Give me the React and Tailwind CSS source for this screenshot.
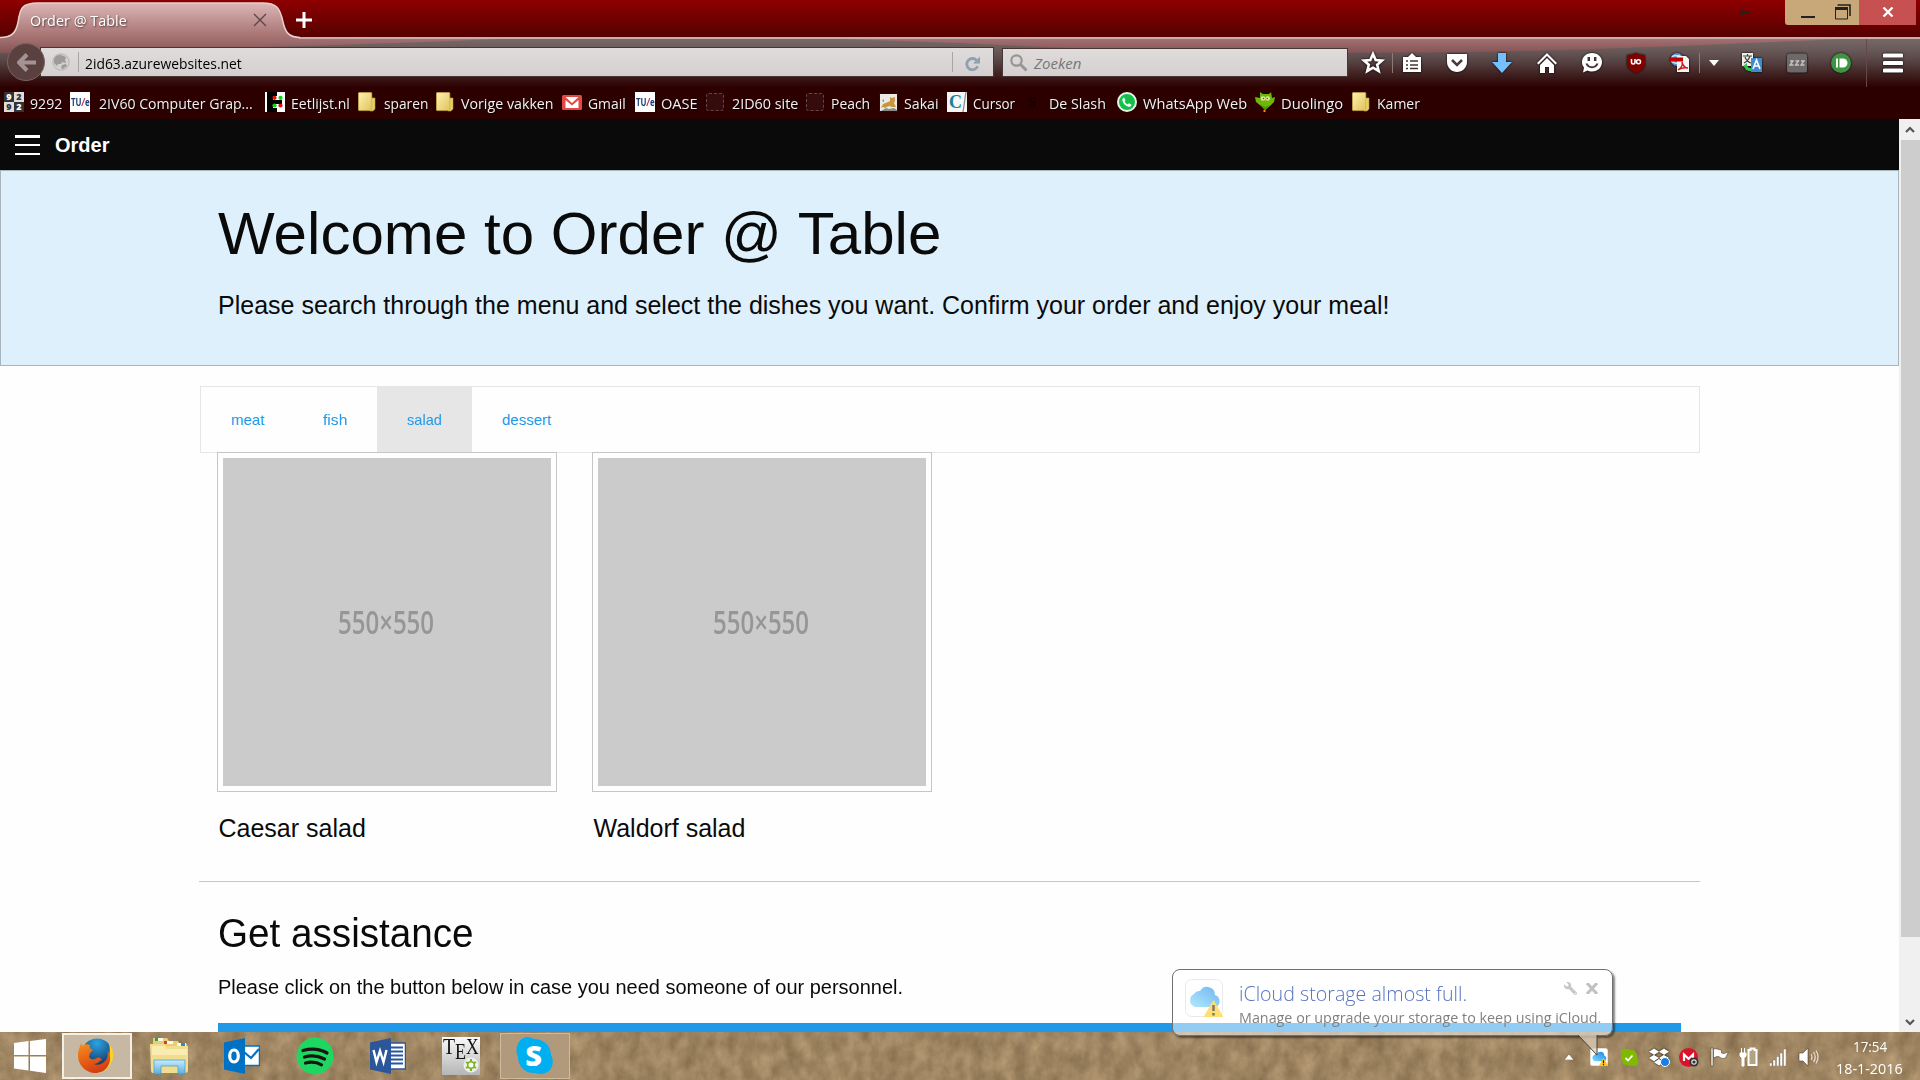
import { useLayoutEffect, useRef } from "react";
import { FaDropbox, FaWrench } from "react-icons/fa";

/* Single line of text squeezed or stretched to the width of its box. */
function Fit({ className = "", children }) {
  const outer = useRef(null);
  const inner = useRef(null);
  useLayoutEffect(() => {
    const natural = inner.current.offsetWidth;
    if (natural) inner.current.style.transform = `scaleX(${outer.current.clientWidth / natural})`;
  }, []);
  return (
    <span ref={outer} className={`block shrink-0 whitespace-nowrap ${className}`}>
      <span ref={inner} className="inline-block origin-left">{children}</span>
    </span>
  );
}

const Folder = () => (
  <svg viewBox="0 0 18 20" className="h-5 w-[18px]">
    <defs>
      <linearGradient id="fold" x1="0" y1="0" x2="1" y2="1">
        <stop offset="0" stopColor="#fff3b0" />
        <stop offset="1" stopColor="#dfc35c" />
      </linearGradient>
    </defs>
    <path d="M13 6h4v11l-2 2h-3z" fill="#e9cf67" stroke="#b59b3c" strokeWidth=".6" />
    <rect x=".4" y=".6" width="13.4" height="18" rx=".8" fill="url(#fold)" stroke="#c9ad4c" strokeWidth=".7" />
  </svg>
);

const Tue = () => (
  <span className="flex h-5 w-5 items-center justify-center bg-white">
    <Fit className="w-[19px] text-[10px] leading-none font-bold text-[#1b3f7a]">TU<i className="text-[#c22a4c]">/</i>e</Fit>
  </span>
);

const Placeholder = () => <span className="h-[18px] w-[18px] rounded-[3px] border border-dashed border-[#664747] bg-[#350b0b]" />;

const Nine = () => (
  <span className="grid h-5 w-5 grid-cols-2 grid-rows-2 text-center text-[9px] leading-[10px] font-bold">
    <b className="bg-[#333] text-white">9</b>
    <b className="bg-[#ddd] text-[#333]">2</b>
    <b className="bg-[#ddd] text-[#333]">9</b>
    <b className="bg-[#333] text-white">2</b>
  </span>
);

const Eet = () => (
  <svg viewBox="0 0 20 20" className="h-5 w-5">
    <path d="M0 0h20v20H0z" fill="#fff" />
    <path d="M2 0h10v4H8v4h9v4H8v4h4v4H2z" fill="#000" />
    <circle cx="9.500" cy="5.800" r="2.100" fill="#f00" />
    <circle cx="15.500" cy="5.800" r="2.100" fill="#0d0" />
    <circle cx="9.500" cy="13.500" r="2.100" fill="#0d0" />
    <circle cx="15.500" cy="13.500" r="2.100" fill="#f00" />
  </svg>
);

const Gmail = () => (
  <svg viewBox="0 0 20 15" className="h-[15px] w-5">
    <rect width="20" height="15" rx="1.500" fill="#e04a42" />
    <path d="M3.500 2h13L10 8zM3.500 13V5L10 10.500 16.500 5v8z" fill="#fff" />
  </svg>
);

const Sakai = () => (
  <svg viewBox="0 0 19 19" className="h-[19px] w-[19px]">
    <path d="M.5.5h18v18H.5z" fill="#eceae4" stroke="#111" />
    <path d="M2 15l2-4 5-2 2-1V4l2 1 3-1v4l-1 2 1 2 1 2-4 0-3-1-4 2-2-1z" fill="#c8963e" />
    <path d="M2 18l5-3 3 1 5-1 3 2v1zM3 8l2-2v3z" fill="#8a8a86" />
  </svg>
);

const Cursor = () => (
  <span className="flex h-5 w-5 bg-[#f6f6f6] pl-[2px]">
    <b className="font-['Liberation_Serif',serif] text-[18px] leading-[20px] text-[#17809c]">C</b>
    <svg viewBox="0 0 5 20" className="h-5 w-[5px]"><path d="M4 0L1 20" stroke="#888" strokeWidth="1.200" /></svg>
  </span>
);

const Whats = () => (
  <span className="flex h-5 w-5 items-center justify-center rounded-full border-2 border-[#e8f5e9] bg-[#12c14a]">
    <svg viewBox="0 0 16 16" className="h-4 w-4 shrink-0"><path d="M5 3.500l1.500 2.700-1 1c.7 1.500 1.700 2.500 3.200 3.200l1.200-1.100 2.600 1.400c-.3 1.800-1.500 2.300-3 2C6.500 12 4 9.500 3.400 6.500 3.200 5 3.700 4 5 3.500z" fill="#fff" /></svg>
  </span>
);

const Duo = () => (
  <svg viewBox="0 0 20 20" className="h-5 w-5">
    <path d="M5 0l3 2h6l2-2 1 6 3-1-1 5-4 4-5 4-4-4-5-4-1-5 5 1z" fill="#6cb80a" />
    <path d="M5 12l5 6 5-5-5 2z" fill="#4f9604" />
    <circle cx="8" cy="6.500" r="2.300" fill="#d8ec9e" />
    <circle cx="12.700" cy="6.500" r="2.300" fill="#d8ec9e" />
    <circle cx="8.400" cy="6.500" r=".8" fill="#555" />
    <circle cx="12.300" cy="6.500" r=".8" fill="#555" />
    <path d="M9.500 8h2l-1 2.500zM8.500 18h2v2h-2z" fill="#f08b1d" />
  </svg>
);

const Slash = () => <b className="w-5 text-center font-['Liberation_Serif',serif] text-[15px] text-[#150000]">S</b>;

const bookmarks = [
  [Nine, "9292", "ml-1 w-5", "ml-[6px] w-[32px]"],
  [Tue, "2IV60 Computer Grap...", "ml-2 w-5", "ml-[9px] w-[154px]"],
  [Eet, "Eetlijst.nl", "ml-3 w-5", "ml-[6px] w-[59px]"],
  [Folder, "sparen", "ml-2 w-[18px]", "ml-2 w-[44px]"],
  [Folder, "Vorige vakken", "ml-2 w-[18px]", "ml-[7px] w-[93px]"],
  [Gmail, "Gmail", "ml-2 w-5", "ml-[6px] w-[38px]"],
  [Tue, "OASE", "ml-[9px] w-5", "ml-[6px] w-[37px]"],
  [Placeholder, "2ID60 site", "ml-2 w-[18px]", "ml-2 w-[66px]"],
  [Placeholder, "Peach", "ml-2 w-[18px]", "ml-[7px] w-[39px]"],
  [Sakai, "Sakai", "ml-[9px] w-[19px]", "ml-[6px] w-[35px]"],
  [Cursor, "Cursor", "ml-2 w-5", "ml-[6px] w-[42px]"],
  [Slash, "De Slash", "ml-[7px] w-5", "ml-[7px] w-[57px]"],
  [Whats, "WhatsApp Web", "ml-[11px] w-5", "ml-[6px] w-[104px]"],
  [Duo, "Duolingo", "ml-2 w-5", "ml-[6px] w-[62px]"],
  [Folder, "Kamer", "ml-[9px] w-[18px]", "ml-[7px] w-[43px]"],
];

function TabStrip() {
  return (
    <div className="relative z-10 flex h-[37px] bg-linear-to-b from-[#8f0000] to-[#560000]">
      <div className="relative flex h-[39px] w-[296px] items-center pt-[2px]">
        <svg viewBox="0 0 300 39" className="absolute top-0 left-0 h-[39px] w-[300px]">
          <defs>
            <linearGradient id="tab" x1="0" y1="0" x2="0" y2="1">
              <stop offset="0" stopColor="#dcb6b6" />
              <stop offset="1" stopColor="#a26c6c" />
            </linearGradient>
          </defs>
          <path d="M0 39v-2c13 0 16-6 18-15C20 8 22 3 38 3h224c15 0 18 5 21 19 2 9 5 15 16 15v2z" fill="url(#tab)" />
          <path d="M0 37.500c13 0 16-6 18-15C20 8 22 3 38 3h224c15 0 18 5 21 19 2 9 5 15.500 17 15.500" fill="none" stroke="#e6d0d0" strokeWidth="1.500" />
        </svg>
        <Fit className="relative ml-[30px] w-[97px] text-[15px] text-white [text-shadow:1px_1px_2px_#0009]">Order @ Table</Fit>
        <svg viewBox="0 0 14 14" className="relative mb-[2px] ml-[126px] h-[14px] w-[14px]"><path d="M1 1l12 12M13 1L1 13" stroke="#5d4646" strokeWidth="1.300" /></svg>
      </div>
      <svg viewBox="0 0 16 16" className="mt-[12px] h-4 w-4"><path d="M8 0v16M0 8h16" stroke="#fff" strokeWidth="3" /></svg>
      <div className="ml-auto flex">
        <svg viewBox="0 0 10 6" className="mt-[9px] mr-[35px] h-[6px] w-[10px]"><path d="M0 3l3-3v2h4V0l3 3-3 3V4H3v2z" fill="#222" /></svg>
        <div className="flex h-[25px] w-[74px] rounded-bl-[3px] bg-[#c8a878]">
          <i className="mt-4 ml-4 h-[2px] w-[14px] bg-[#222]" />
          <svg viewBox="0 0 16 16" className="mt-1 ml-5 h-4 w-4"><path d="M2.500 1H15v11" fill="none" stroke="#222" strokeWidth="1.600" /><path d="M.5 4h12v11H.5z" fill="#c8a878" stroke="#222" /><path d="M0 3h13v3H0z" fill="#222" /></svg>
        </div>
        <div className="mr-1 flex h-[25px] w-[57px] items-center justify-center bg-[#c75050]">
          <svg viewBox="0 0 12 10" className="mb-[2px] h-[10px] w-3"><path d="M1.500.5l9 9M10.500.5l-9 9" stroke="#fff" strokeWidth="2.300" /></svg>
        </div>
      </div>
    </div>
  );
}

const ToolIcon = ({ className, children }) => (
  <svg viewBox="0 0 20 20" className={`h-5 w-5 shrink-0 drop-shadow-[0_0_1px_#000] ${className}`}>{children}</svg>
);

function NavBar() {
  return (
    <div className="relative flex h-[50px] items-start border-t-2 border-[#c8adad] bg-[linear-gradient(#786969,#675757_25%,#5a4848_42%,#3f1f1f_75%,#2d0000)]">
      <svg viewBox="0 0 1920 14" preserveAspectRatio="none" className="absolute top-0 left-0 h-[14px] w-[1920px]">
        <defs>
          <linearGradient id="glass" x1="0" y1="0" x2="0" y2="1">
            <stop offset="0" stopColor="#a17070" />
            <stop offset="1" stopColor="#855353" />
          </linearGradient>
        </defs>
        <path d="M0 0h500Q320 8 0 14zM840 0h1000Q1560 13 1420 13.500 1150 14 960 4z" fill="url(#glass)" />
      </svg>
      <div className="relative z-10 mt-[4px] ml-[7px] flex h-[38px] w-[38px] shrink-0 items-center justify-center rounded-full border border-[#7d6262] bg-[#5b4040]">
        <svg viewBox="0 0 18 18" className="h-[19px] w-[19px]"><path d="M9.500 1.500L2 9l7.500 7.500M2.500 9H18" fill="none" stroke="#a39393" strokeWidth="4" /></svg>
      </div>
      <div className="relative mt-[8px] -ml-[5px] flex h-[30px] w-[954px] shrink-0 items-center border border-[#4a3535] bg-linear-to-b from-[#e0dcdc] to-[#d5d0d0]">
        <svg viewBox="0 0 18 18" className="ml-[11px] h-[18px] w-[18px]">
          <circle cx="9" cy="9" r="8.200" fill="#d3d0d0" stroke="#b5b2b2" />
          <path d="M9 2l5 2-1 3 1 3-4-1-1 2-3 0-1 2-3-3 0-4 2-3 3-1zM10 12l4-1 1 2-4 3-2-1z" fill="#9d9a9a" />
        </svg>
        <i className="ml-2 h-5 w-px bg-[#aaa4a4]" />
        <Fit className="ml-[6px] w-[157px] pt-[2px] text-[15px] text-black">2id63.azurewebsites.net</Fit>
        <i className="ml-auto h-5 w-px bg-[#aaa4a4]" />
        <svg viewBox="0 0 16 16" className="mt-[2px] mr-[13px] ml-[12px] h-[15px] w-[15px]"><path d="M12.300 4.500A6 6 0 1 0 13.500 11" fill="none" stroke="#8fa0ae" strokeWidth="3" /><path d="M16 .5v7.500H8.500z" fill="#8fa0ae" /></svg>
      </div>
      <div className="relative mt-[9px] ml-[8px] flex h-[29px] w-[346px] shrink-0 items-center border border-[#4a3535] bg-linear-to-b from-[#e0dcdc] to-[#d5d0d0]">
        <svg viewBox="0 0 18 18" className="ml-[7px] h-[18px] w-[18px]"><circle cx="6.500" cy="6.500" r="5.200" fill="none" stroke="#999494" strokeWidth="2.200" /><path d="M10.500 10.500l6 6" stroke="#999494" strokeWidth="3" /></svg>
        <Fit className="ml-[6px] w-[47px] pt-[1px] text-[15px] text-[#777] italic">Zoeken</Fit>
      </div>
      <div className="relative flex h-12 shrink-0 items-center pb-px text-white">
        <ToolIcon className="ml-[15px] overflow-visible"><path d="M10 1l2.700 6 6.300.6-4.800 4.200 1.500 6.200-5.700-3.300L4.300 18l1.500-6.200L1 7.600 7.300 7z" fill="none" stroke="#fff" strokeWidth="2.600" /></ToolIcon>
        <i className="ml-[9px] h-5 w-px bg-[#8d7878]" />
        <ToolIcon className="ml-[9px]"><path d="M1 4h5l4-4 4 4h5v15H1z" fill="#fff" /><path d="M4 8h2M8 8h8M4 12h2M8 12h8M4 15.500h2M8 15.500h8" stroke="#443333" strokeWidth="1.700" /></ToolIcon>
        <ToolIcon className="ml-[25px]"><path d="M0 1h20v8c0 6-5 10-10 10S0 15 0 9z" fill="#fff" /><path d="M5 7l5 5 5-5" fill="none" stroke="#4a3a3a" strokeWidth="2.500" /></ToolIcon>
        <ToolIcon className="ml-[25px]"><path d="M6 0h8v9h6L10 20 0 9h6z" fill="#75bfff" /></ToolIcon>
        <ToolIcon className="ml-[25px]"><path d="M10 0l10 10-1.500 1.500L10 3 1.500 11.500 0 10z" fill="#fff" /><path d="M10 5l7 7v8h-5v-6H8v6H3v-8z" fill="#fff" /></ToolIcon>
        <ToolIcon className="ml-[25px]"><path d="M10 0c6 0 10 4 10 9s-4 9.500-10 9.500c-2 0-3-.3-4.500-1L1 19.500l1-5C.5 13 0 11 0 9c0-5 4-9 10-9z" fill="#fff" /><path d="M6.800 4v4M13.200 4v4" stroke="#443535" strokeWidth="2.500" /><path d="M4.500 10.500c2 5 9 5 11 0" fill="none" stroke="#443535" strokeWidth="2" /></ToolIcon>
        <ToolIcon className="ml-[24px]"><path d="M10 0q4 2.500 9 2v8c0 5-4 8-9 10-5-2-9-5-9-10V2q5 .5 9-2z" fill="#800000" /><path d="M5.500 6v3.500c0 2 3.500 2 3.500 0V6" fill="none" stroke="#fff" strokeWidth="1.600" /><circle cx="12.500" cy="8.800" r="2" fill="none" stroke="#fff" strokeWidth="1.500" /></ToolIcon>
        <ToolIcon className="ml-[24px]"><circle cx="7" cy="6.500" r="6.500" fill="#5d92d8" /><path d="M2 4c3-3 5 0 8-2M1 8c3 1 4 3 6 2" stroke="#cfe2fa" strokeWidth="1.500" fill="none" /><path d="M7 3h9l3 3v13H7z" fill="#f4f4f4" /><path d="M0 4.500h13v4H0z" fill="#c00000" /><path d="M8 17c3-2 5-5 4-8 1 4 3 6 6 6-3-.5-7 0-10 2z" fill="none" stroke="#d01818" strokeWidth="1.400" /></ToolIcon>
        <i className="ml-[9px] h-5 w-px bg-[#8d7878]" />
        <svg viewBox="0 0 10 6" className="ml-[9px] h-[6px] w-[10px]"><path d="M0 0h10L5 6z" fill="#fff" /></svg>
        <ToolIcon className="ml-[23px]"><path d="M0 0h11v13H0z" fill="#efefe6" /><path d="M1 3h9M5.500 1v2M2 10c4-2 5-4 6-7M3 4c1 3 3 5 6 6" stroke="#444" fill="none" strokeWidth="1.200" /><path d="M9 5h11v14H9z" fill="#3f8bd0" /><path d="M11 16l3.500-9 3.500 9M12.300 13h4.500" stroke="#fff" fill="none" strokeWidth="1.600" /><path d="M1 13l4-3v2c1 3 2 3 4 3v3c-3 0-5 0-6-3z" fill="#2fc455" /></ToolIcon>
        <ToolIcon className="ml-[25px]"><rect y=".5" width="20" height="19" rx="2.500" fill="#6d6969" /><path d="M3 8h3l-3 4h3.500M8.500 8h3l-3 4H12M14 8h3l-3 4h3.500" fill="none" stroke="#c7c3c3" strokeWidth="1.300" /></ToolIcon>
        <ToolIcon className="ml-[24px]"><circle cx="10" cy="10" r="10" fill="#3f9442" /><path d="M5 5.500h2v9H5zM8.500 5.500h3.500a4.500 4.500 0 0 1 0 9H8.500z" fill="#fff" /></ToolIcon>
        <i className="ml-[15px] h-12 w-px bg-[#65494a]" />
        <ToolIcon className="ml-[16px]"><path d="M1.500 2.500h17M1.500 10h17M1.500 17.500h17" stroke="#fff" strokeWidth="4" strokeLinecap="round" /></ToolIcon>
      </div>
    </div>
  );
}

function Bookmarks() {
  return (
    <div className="flex h-8 items-center bg-[#2d0000] pb-[2px]">
      {bookmarks.map(([Icon, label, box, text]) => (
        <div key={label} className="flex items-center">
          <span className={`flex shrink-0 justify-center ${box}`}><Icon /></span>
          <Fit className={`pt-[1px] text-[15px] leading-5 text-[#f5f0f0] [text-shadow:1px_1px_1px_#000] ${text}`}>{label}</Fit>
        </div>
      ))}
    </div>
  );
}

const Dish = ({ name }) => (
  <div className="w-[375px] pl-[17px]">
    <div className="h-[340px] w-[340px] border border-[#c6c6c6] bg-[#fefefe] p-[5px]">
      <div className="flex h-full items-center justify-center bg-[#cbcbcb] pr-[2px] pb-[2px]">
        <Fit className="h-[39px] w-[96px] font-['Open_Sans',sans-serif] text-[33px] leading-[39px] font-semibold text-[#969696]">550×550</Fit>
      </div>
    </div>
    <h3 className="mt-[18px] pl-[1.500px] text-[25px] leading-[36px]">{name}</h3>
  </div>
);

function Page() {
  return (
    <div className="flex h-[913px] overflow-hidden bg-[#fefefe] font-['Liberation_Sans',sans-serif] text-[#0a0a0a]">
      <main className="w-[1899px] shrink-0">
        <header className="flex h-[51px] items-center bg-[#0a0a0a] text-white">
          <div className="mt-[1px] ml-[15px] flex w-[25px] flex-col">
            <i className="h-[3px] bg-white" /><i className="mt-[6px] h-[2px] bg-white" /><i className="mt-[7px] h-[2px] bg-white" />
          </div>
          <b className="ml-[15px] text-[20px]">Order</b>
        </header>
        <section className="h-[196px] border border-[#a9b5bd] bg-[#def0fc] pt-[21px] pl-[217px]">
          <Fit className="w-[723px] text-[60px] leading-[84px]">Welcome to Order @ Table</Fit>
          <Fit className="mt-[9px] w-[1171px] text-[25px] leading-[40px]">Please search through the menu and select the dishes you want. Confirm your order and enjoy your meal!</Fit>
        </section>
        <div className="mt-5 ml-[200px] w-[1500px]">
          <nav className="flex h-[67px] border border-[#e6e6e6] text-[15px] leading-[65px] text-[#2199e8]">
            <a className="pl-[30px]"><Fit className="w-[33px]">meat</Fit></a>
            <a className="pr-[30px] pl-[59px]"><Fit className="w-[24px]">fish</Fit></a>
            <a className="w-[95px] bg-[#e6e6e6] pl-[30px]"><Fit className="w-[35px]">salad</Fit></a>
            <a className="pl-[30px]"><Fit className="w-[49px]">dessert</Fit></a>
          </nav>
          <div className="relative -mt-px flex">
            <Dish name="Caesar salad" />
            <Dish name="Waldorf salad" />
          </div>
          <hr className="mt-[35px] -ml-px border-[#c6c6c6]" />
          <div className="pl-[18px]">
            <Fit className="mt-[23px] w-[256px] text-[40px] leading-[56px]">Get assistance</Fit>
            <Fit className="mt-[10px] w-[685px] text-[20px] leading-[32px]">Please click on the button below in case you need someone of our personnel.</Fit>
            <div className="mt-5 h-16 w-[1463px] bg-[#2199e8]" />
          </div>
        </div>
      </main>
      <aside className="flex w-[21px] flex-col items-center bg-[#f0f0f0] pl-[1px]">
        <svg viewBox="0 0 10 7" className="mt-[7px] h-[7px] w-[10px]"><path d="M1 6l4-4 4 4" fill="none" stroke="#555" strokeWidth="2.200" /></svg>
        <i className="mt-[7px] h-[797px] w-[19px] bg-[#cdcdcd]" />
        <svg viewBox="0 0 10 7" className="mt-auto mb-[6px] h-[7px] w-[10px]"><path d="M1 1l4 4 4-4" fill="none" stroke="#555" strokeWidth="2.200" /></svg>
      </aside>
    </div>
  );
}

const Firefox = () => (
  <svg viewBox="0 0 36 36" className="h-9 w-9">
    <defs>
      <radialGradient id="ffb" cx=".5" cy=".15" r=".8"><stop offset="0" stopColor="#2ba5e0" /><stop offset="1" stopColor="#12285f" /></radialGradient>
      <linearGradient id="ffo" x1=".2" y1="0" x2=".6" y2="1"><stop offset="0" stopColor="#f58a1c" /><stop offset="1" stopColor="#d33a10" /></linearGradient>
    </defs>
    <circle cx="19" cy="16" r="15.500" fill="url(#ffb)" />
    <path d="M31 5c5 6 6 15 1 22-2 4-7 7-12 8 6-4 11-9 11-16 1-5 1-9 0-14z" fill="#fbd22c" />
    <path d="M3 5c1 1 1 2 1 3 3-2 5-2 8-1-1 2 0 4 3 5l-3 3-1 4c2 3 5 3 8 1 2-1 4 0 5 2-3 1-4 4-8 4 5 2 11-1 13-6 1-3 1-5 0-8 4 5 4 11 1 16-3 5-8 7-13 7C8 35 0 27 0 18 0 12 2 9 3 5z" fill="url(#ffo)" />
  </svg>
);

const Explorer = () => (
  <svg viewBox="0 0 39 38" className="h-[38px] w-[39px]">
    <defs><linearGradient id="exb" x1="0" y1="0" x2="0" y2="1"><stop offset="0" stopColor="#c9ecfb" /><stop offset="1" stopColor="#58aee0" /></linearGradient></defs>
    <path d="M3 1l14 0 2 3 9 0 2 3h7v10H3z" fill="#e8cd71" />
    <path d="M5 1h8v3H5z" fill="#f8f8f0" /><path d="M5 1h3v3H5z" fill="#28a344" />
    <path d="M14 4h9v3h-9z" fill="#f8f8f0" /><path d="M14 4h3v3h-3z" fill="#d53b2e" />
    <path d="M27 6h9v3h-9z" fill="#f8f8f0" /><path d="M31 6h4v3h-4z" fill="#3186ce" />
    <path d="M0 7h14l3 2h21v24q0 3-3 3H3q-2 0-2-3z" fill="#f1dd8e" />
    <path d="M2 9l12 0 3 3h20v6H2z" fill="#faebb0" />
    <path d="M4 23h31v14h-7v-8H11v8H4z" fill="url(#exb)" stroke="#3f98cf" strokeWidth=".7" />
  </svg>
);

const Outlook = () => (
  <svg viewBox="0 0 36 36" className="h-9 w-9">
    <rect x="19" y="8" width="16.500" height="19.500" fill="#fff" stroke="#0072c6" strokeWidth="1.500" />
    <path d="M20 9v5l7 6 8-9" fill="none" stroke="#0072c6" strokeWidth="2.200" />
    <path d="M0 4.500L21 0v36L0 31.500z" fill="#0072c6" />
    <ellipse cx="10" cy="18" rx="4.300" ry="6" fill="none" stroke="#fff" strokeWidth="3.200" />
  </svg>
);

const Spotify = () => (
  <svg viewBox="0 0 38 38" className="h-[38px] w-[38px]">
    <circle cx="19" cy="19" r="18.500" fill="#1ed760" />
    <path d="M7 13.500c8-2.200 17-1.500 24 2.500M8.500 20c7-2 14-1 20 2M9.500 26c6-1.500 11-1 16 1.800" fill="none" stroke="#191414" strokeWidth="3.200" strokeLinecap="round" />
  </svg>
);

const Word = () => (
  <svg viewBox="0 0 36 36" className="h-9 w-9">
    <rect x="19" y="5" width="16.500" height="26" fill="#fff" stroke="#2b579a" strokeWidth="1.500" />
    <path d="M21 9.500h12M21 13.500h12M21 17.500h12M21 21.500h12M21 25.500h12" stroke="#2b579a" strokeWidth="1.800" />
    <path d="M0 4.500L21 0v36L0 31.500z" fill="#2b579a" />
    <path d="M3.500 12l3 12 3.500-11 3.500 11 3-12" fill="none" stroke="#fff" strokeWidth="2.400" />
  </svg>
);

const Tex = () => (
  <span className="relative flex h-[38px] w-[38px] bg-linear-to-b from-[#fafafa] to-[#b5b5b5] pl-px font-['Liberation_Serif',serif] text-[23px] leading-[19px] text-[#111]">
    <Fit className="w-3">T</Fit><Fit className="w-[11px] pt-[5px]">E</Fit><Fit className="w-[13px]">X</Fit>
    <svg viewBox="0 0 16 16" className="absolute right-px bottom-[2px] h-4 w-4"><circle cx="8" cy="8" r="7.500" fill="#eee" /><path d="M8 2v12M3 5l10 6M13 5L3 11" stroke="#7ab51d" strokeWidth="2" /><circle cx="8" cy="8" r="3.300" fill="#fff" stroke="#7ab51d" strokeWidth="1.600" /></svg>
  </span>
);

const Skype = () => (
  <svg viewBox="0 0 37 38" className="h-[38px] w-[37px]">
    <path d="M11 0c3 0 5 1 7 2 10 0 17 7 17 16 3 5 2 11-1 15-4 4-10 5-14 3C10 37 2 30 2 20-2 12 2 1 11 0z" fill="#00aff0" />
    <text x="17.500" y="29" textAnchor="middle" fontSize="29" fontWeight="800" fill="#fff" fontFamily="Open Sans, sans-serif">S</text>
  </svg>
);

const apps = [
  ["firefox", Firefox, "border-2 border-[#f4f0e8] bg-[#c6b8a2]"],
  ["explorer", Explorer, ""],
  ["outlook", Outlook, ""],
  ["spotify", Spotify, ""],
  ["word", Word, ""],
  ["tex", Tex, ""],
  ["skype", Skype, "border border-[#cdbb9d] bg-[#b09a7b]"],
];

const CloudIcon = ({ className }) => (
  <svg viewBox="0 0 38 38" className={className}>
    <defs><linearGradient id="cl" x1="1" y1="0" x2="0" y2="1"><stop offset="0" stopColor="#1683ea" /><stop offset="1" stopColor="#7ddcfa" /></linearGradient></defs>
    <rect x=".5" y=".5" width="37" height="37" rx="6" fill="#fff" stroke="#ddd" />
    <path d="M10 28a7 7 0 0 1-1-13 7 7 0 0 1 6-3 8 8 0 0 1 15 4 6.500 6.500 0 0 1 1 12z" fill="url(#cl)" />
    <path d="M28.500 21L38.500 38h-20z" fill="#ffc91a" />
    <path d="M28.500 26v6M28.500 34v2.500" stroke="#2b2000" strokeWidth="2.500" />
  </svg>
);

function Taskbar() {
  return (
    <div className="relative flex h-12 bg-[#9f8663] text-white">
      <svg className="absolute inset-0 h-full w-full opacity-30">
        <filter id="grass" x="0" y="0" width="100%" height="100%" colorInterpolationFilters="sRGB">
          <feTurbulence type="fractalNoise" baseFrequency="0.07 0.05" numOctaves="5" seed="8" />
          <feColorMatrix values="0.8 0 0 0 0.22  0.75 0 0 0 0.14  0.65 0 0 0 0.05  0 0 0 0 1" />
        </filter>
        <rect width="100%" height="100%" filter="url(#grass)" />
      </svg>
      <div className="relative flex w-full items-start">
        <svg viewBox="0 0 32 34" className="mt-[7px] ml-[14px] h-[34px] w-8"><path d="M0 4l14.500-2v14H0zM16 2l16-2v16H16zM0 17.500h14.500v14L0 29.500zM16 17.500h16V34l-16-2.300z" fill="#fff" /></svg>
        <div className="mt-px ml-4 flex gap-[3px]">
          {apps.map(([id, Icon, frame]) => (
            <div key={id} className={`flex h-[46px] w-[70px] items-center justify-center ${frame}`}><span className="-ml-[2px]"><Icon /></span></div>
          ))}
        </div>
        <div className="ml-auto flex h-[50px] items-center">
          <svg viewBox="0 0 10 6" className="mr-[16px] h-[6px] w-[10px]"><path d="M0 6h10L5 0z" fill="#fff" stroke="#5a4a35" strokeWidth=".5" /></svg>
          <CloudIcon className="mr-3 h-[18px] w-[18px]" />
          <svg viewBox="0 0 18 19" className="mr-[11px] h-[19px] w-[18px]"><path d="M1 2q1-2 4-1l8 1q4 2 4 7l1 6q-1 4-5 3l-7-1Q2 16 1 10z" fill="#7fba00" /><path d="M5.500 10l2.500 2.500 4.500-5" fill="none" stroke="#fff" strokeWidth="1.800" /></svg>
          <span className="relative mr-[10px] h-5 w-5">
            <FaDropbox className="h-5 w-5 drop-shadow-[0_0_1px_#000]" />
            <i className="absolute -right-px bottom-0 h-[10px] w-[10px] rounded-full border border-white bg-[#1a7fe0]" />
          </span>
          <svg viewBox="0 0 20 19" className="mr-[11px] h-[19px] w-5"><circle cx="9.500" cy="9.500" r="9.500" fill="#d9132b" /><path d="M5 13V6.500l4.500 4.200L14 6.500V13" fill="none" stroke="#fff" strokeWidth="2.200" /><circle cx="15" cy="14" r="4.500" fill="#333" /><circle cx="15" cy="14" r="2.200" fill="none" stroke="#ddd" strokeWidth="1.200" /></svg>
          <svg viewBox="0 0 20 20" className="mr-[9px] h-5 w-5"><path d="M1 1h2v18H1z" fill="#fff" stroke="#4d3f2c" strokeWidth=".6" /><path d="M3.500 2c4-1 5 1 8 1v3c2 1 4 0 7-1l-3 6c-3 1-5 0-6-1-2-1-4 0-6 1z" fill="#fff" stroke="#4d3f2c" strokeWidth=".6" /></svg>
          <svg viewBox="0 0 19 20" className="mr-[11px] h-5 w-[19px]"><path d="M9.500 3h2V1.500h4V3h2v15h-8z" fill="#b3a385" stroke="#fff" strokeWidth="2" /><path d="M2.500 1v5M5.500 1v5M1 6h6v3l-2 2v8H3v-8L1 9z" stroke="#fff" strokeWidth="1" fill="#fff" /></svg>
          <svg viewBox="0 0 17 18" className="mr-3 h-[18px] w-[17px]"><path d="M.5 15h2.500v3H.5zM4 12h2.500v6H4zM7.500 8.500H10V18H7.500zM11 5h2.500v13H11zM14.500 1H17v17h-2.500z" fill="#fff" stroke="#4d3f2c" strokeWidth=".3" /></svg>
          <svg viewBox="0 0 21 20" className="mr-[17px] h-5 w-[21px]"><path d="M1 6h4l5-5v18l-5-5H1z" fill="#fff" stroke="#4d3f2c" strokeWidth=".6" /><path d="M13 7q2 3 0 6M15.500 5q3.500 5 0 10M18 3.500q4 6.500 0 13" fill="none" stroke="#e9e2d4" strokeWidth="1.200" /></svg>
          <div className="mr-[17px] mb-px flex flex-col items-center text-[15px] leading-[22px]">
            <Fit className="w-[34px]">17:54</Fit>
            <Fit className="w-[67px]">18-1-2016</Fit>
          </div>
        </div>
      </div>
      <Notification />
    </div>
  );
}

function Notification() {
  return (
    <div className="absolute top-[-63px] left-[1172px] h-[67px] w-[441px] rounded-lg border border-[#707070] bg-white/50 shadow-[2px_2px_2px_#0007]">
      <svg viewBox="0 0 22 22" className="absolute top-[65px] left-[405px] h-[22px] w-[22px]"><path d="M0 0l19 20V0z" fill="#dccfbb" fillOpacity=".75" /><path d="M0 0l19 20V0" fill="none" stroke="#4a4238" /></svg>
      <div className="flex pt-[9px] pl-[12px]">
        <CloudIcon className="h-[38px] w-[38px] opacity-60" />
        <div className="ml-[16px] w-[362px]">
          <Fit className="w-[228px] text-[20px] leading-[29px] font-light text-[#5573c2]">iCloud storage almost full.</Fit>
          <Fit className="-mt-[2px] w-[362px] text-[15px] leading-[22px] text-[#808080]">Manage or upgrade your storage to keep using iCloud.</Fit>
        </div>
      </div>
      <FaWrench className="absolute top-3 left-[391px] h-[13px] w-[13px] -scale-x-100 text-[#c6c6c6]" />
      <svg viewBox="0 0 12 11" className="absolute top-[13px] left-[413px] h-[11px] w-3"><path d="M1 0l10 11M11 0L1 11" stroke="#c2c2c2" strokeWidth="3" /></svg>
    </div>
  );
}

export default function App() {
  return (
    <div className="h-[1080px] w-[1920px] overflow-hidden bg-[#2d0000] font-['Open_Sans','Noto_Sans',sans-serif]">
      <TabStrip />
      <NavBar />
      <Bookmarks />
      <Page />
      <Taskbar />
    </div>
  );
}
